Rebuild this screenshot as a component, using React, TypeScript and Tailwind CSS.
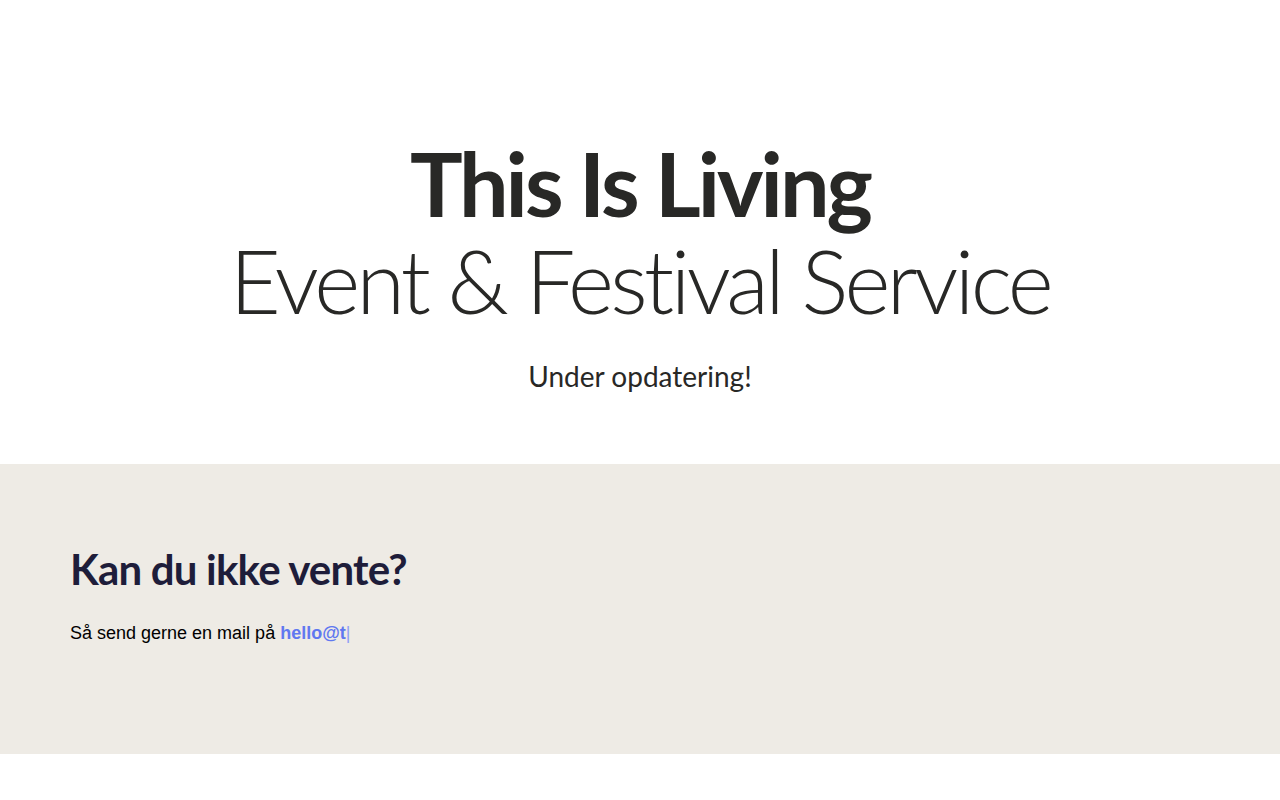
import React from "react";

export default function App() {
  return (
    <div className="w-full min-h-[800px] bg-white" style={{ fontFamily: "Lato, sans-serif" }}>
      <section className="h-[464px] flex flex-col items-center pt-[135px]">
        <h1 className="text-[88px] leading-[97px] font-bold text-[#282826] tracking-[-3px] whitespace-nowrap">This Is Living</h1>
        <h2 className="text-[88px] leading-[97px] font-light text-[#282826] tracking-[-3.6px] whitespace-nowrap">Event &amp; Festival Service</h2>
        <p className="mt-[30px] text-[28px] leading-[34px] font-normal text-[#282826]">Under opdatering!</p>
      </section>
      <section className="h-[290px] bg-[#eeebe5] px-[70px] pt-[80px]">
        <h3 className="text-[42px] leading-[50px] font-bold text-[#1e1d3a] tracking-[-0.8px]">Kan du ikke vente?</h3>
        <p className="mt-[26px] text-[18px] leading-[27px] text-black" style={{ fontFamily: '"Liberation Sans", Arial, sans-serif' }}>
          Så send gerne en mail på{" "}
          <a href="#" className="font-bold text-[#6078f0]">hello@t</a>
          <span className="text-[#8fa0f5] font-thin">|</span>
        </p>
      </section>
    </div>
  );
}
